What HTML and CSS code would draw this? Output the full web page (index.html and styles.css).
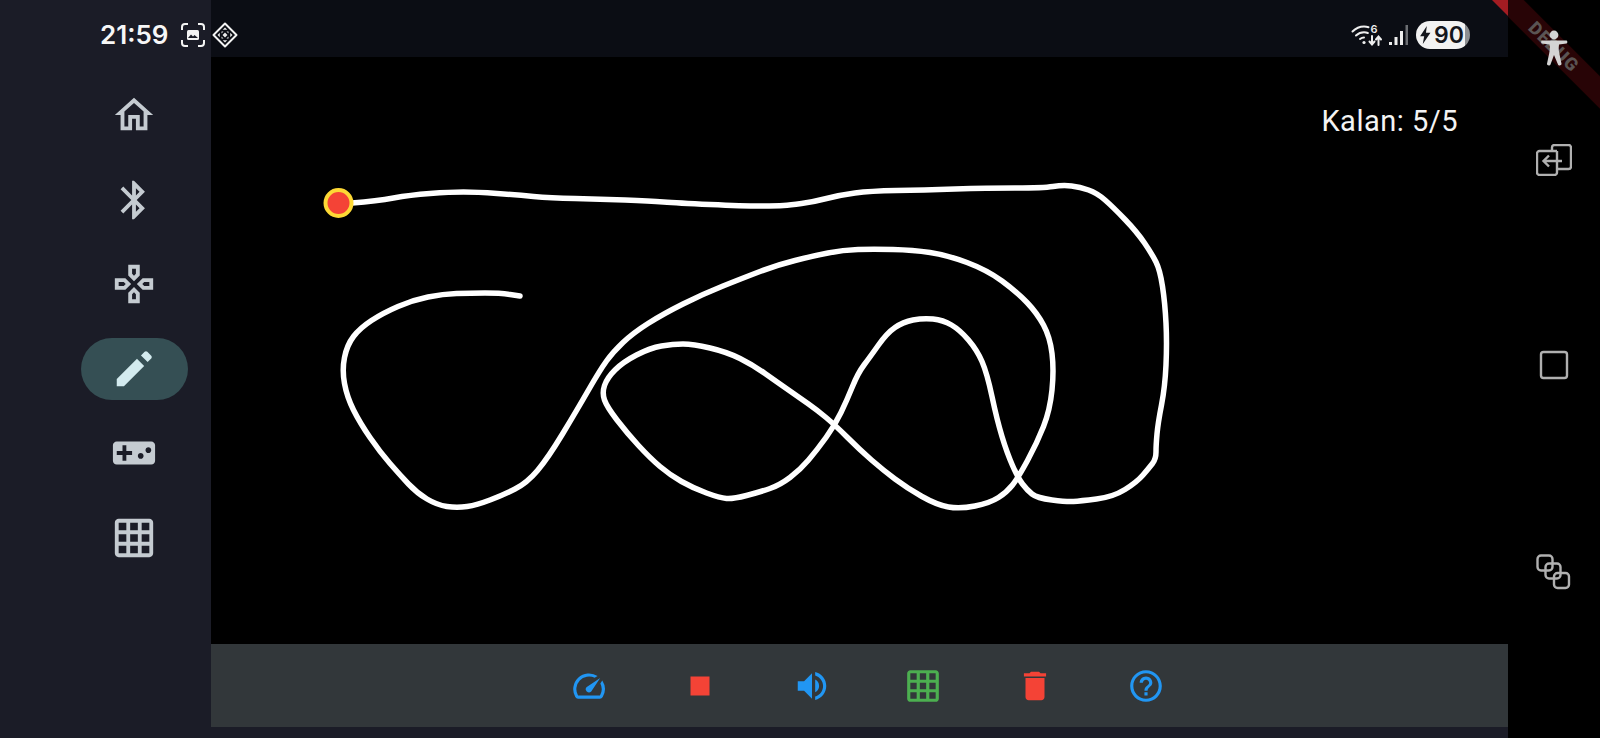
FILE: index.html
```html
<!DOCTYPE html>
<html lang="tr">
  <head>
    <meta charset="UTF-8">
    <meta name="viewport" content="width=device-width, initial-scale=1.0">
    <title>Çizim</title>
    <link rel="stylesheet" href="styles.css">
  </head>
  <body>
    <div class="screen">
      <aside class="rail">
        <div class="rail-status">
          <span class="clock">21:59</span>
          <svg class="capture-icon" viewBox="0 0 24 24"><path class="corners" d="M1 7V4a3 3 0 0 1 3-3h3M17 1h3a3 3 0 0 1 3 3v3M23 17v3a3 3 0 0 1-3 3h-3M7 23H4a3 3 0 0 1-3-3v-3"/><path class="picture" d="M7.5 7h9a1.5 1.5 0 0 1 1.5 1.500v7a1.500 1.500 0 0 1-1.500 1.500h-9A1.500 1.500 0 0 1 6 15.500v-7A1.500 1.500 0 0 1 7.500 7z"/><path class="scene" d="M7 15l3-3.500 2 2 1.500-1.500 3.500 3z"/></svg>
        </div>
        <nav class="rail-nav">
          <div class="nav-item"><svg viewBox="0 0 24 24"><path d="M12 5.690l5 4.500V18h-2v-6H9v6H7v-7.810l5-4.500M12 3L2 12h3v8h6v-6h2v6h6v-8h3L12 3z"/></svg></div>
          <div class="nav-item"><svg viewBox="0 0 24 24"><path d="M17.710 7.710L12 2h-1v7.590L6.410 5 5 6.410 10.590 12 5 17.590 6.410 19 11 14.410V22h1l5.710-5.710-4.300-4.290 4.300-4.290zM13 5.830l1.880 1.880L13 9.590V5.830zm1.880 10.460L13 18.170v-3.760l1.880 1.880z"/></svg></div>
          <div class="nav-item"><svg viewBox="0 0 24 24"><path d="M13 4v2.670l-1 1-1-1V4h2m7 7v2h-2.670l-1-1 1-1H20M6.670 11l1 1-1 1H4v-2h2.670M12 16.330l1 1V20h-2v-2.670l1-1M15 2H9v5.500l3 3 3-3V2zm7 7h-5.500l-3 3 3 3H22V9zM7.500 9H2v6h5.500l3-3-3-3zm4.500 4.500l-3 3V22h6v-5.500l-3-3z"/></svg></div>
          <div class="nav-item active"><svg viewBox="0 0 24 24"><path d="M3 17.250V21h3.750L17.300 10.450l-3.750-3.750z"/><path d="M21 6.500c.39-.39.39-1.020 0-1.410l-2.050-2.050c-.39-.39-1.020-.39-1.410 0l-1.900 1.900 3.460 3.460z"/></svg></div>
          <div class="nav-item"><svg viewBox="0 0 24 24"><path d="M21 6H3c-1.100 0-2 .9-2 2v8c0 1.100.9 2 2 2h18c1.100 0 2-.9 2-2V8c0-1.100-.9-2-2-2zm-10 7H8v3H6v-3H3v-2h3V8h2v3h3v2zm4.500 2c-.83 0-1.500-.67-1.500-1.500s.67-1.500 1.500-1.500 1.500.67 1.500 1.500-.67 1.500-1.500 1.500zm4-3c-.83 0-1.500-.67-1.500-1.500S18.670 9 19.500 9s1.500.67 1.500 1.500-.67 1.500-1.500 1.500z"/></svg></div>
          <div class="nav-item"><svg viewBox="0 0 24 24"><path d="M20 2H4c-1.100 0-2 .9-2 2v16c0 1.100.9 2 2 2h16c1.100 0 2-.9 2-2V4c0-1.100-.9-2-2-2zM8 20H4v-4h4v4zm0-6H4v-4h4v4zm0-6H4V4h4v4zm6 12h-4v-4h4v4zm0-6h-4v-4h4v4zm0-6h-4V4h4v4zm6 12h-4v-4h4v4zm0-6h-4v-4h4v4zm0-6h-4V4h4v4z"/></svg></div>
        </nav>
      </aside>

      <main class="main">
        <header class="topbar">
          <svg class="diamond-icon" viewBox="0 0 26 26"><path class="diamond" d="M13 1.500L24.500 13 13 24.500 1.500 13z"/><path class="diamond-fill" d="M13 5.500l2.300 2.300h-4.600zM13 20.500l-2.300-2.300h4.600zM5.500 13l2.300-2.300v4.600zM20.500 13l-2.300 2.300v-4.600zM13 10.500l2.500 2.500-2.500 2.500-2.500-2.500zM9.500 9.500h2l-2 2zM16.500 9.500v2l-2-2zM9.500 16.500v-2l2 2zM16.500 16.500h-2l2-2z"/></svg>
          <div class="status-right">
            <svg class="wifi-icon" viewBox="0 0 32 24"><path class="wifi" d="M1.500 8.500C5 5 9 3.500 13 3.500c1.500 0 3 .2 4.500.7M5 12.500c2.500-2.200 5-3.200 8-3.200 1.300 0 2.600.2 3.800.7M9 16c1.300-1 2.600-1.500 4-1.500"/><circle class="wifi-dot" cx="13" cy="19.500" r="1.600"/><text class="wifi-gen" x="19.500" y="10">6</text><path class="wifi" d="M21 13v8M18.500 18.500l2.500 3 2.500-3M27.500 22v-8M25 16.500l2.500-3 2.500 3"/></svg>
            <svg class="signal-icon" viewBox="0 0 20 22"><path class="bar" d="M1 18h3v3H1zM6.500 13h3v8h-3zM12 7h3v14h-3z"/><path class="bar-empty" d="M17.500 1H20v20h-2.500z"/></svg>
            <div class="battery">
              <svg class="bolt" viewBox="0 0 12 20"><path d="M7.500 0L0 11.500h4.500L3 20l8.500-12.500H6.500z"/></svg>
              <span>90</span>
            </div>
          </div>
          <div class="corner-flag"></div>
        </header>

        <section class="canvas">
          <svg class="drawing" viewBox="211 57 1297 587">
            <path id="stroke" class="stroke" d=""/>
            <circle class="start-dot" cx="338.500" cy="203" r="13"/>
          </svg>
          <div class="remaining">Kalan: 5/5</div>
        </section>

        <footer class="toolbar">
          <svg class="blue" viewBox="0 0 24 24"><path d="M20.380 8.570l-1.230 1.850a8 8 0 0 1-.22 7.580H5.070A8 8 0 0 1 15.580 6.850l1.850-1.230A10 10 0 0 0 3.350 19a2 2 0 0 0 1.720 1h13.850a2 2 0 0 0 1.740-1 10 10 0 0 0-.27-10.440z"/><path d="M10.590 15.410a2 2 0 0 0 2.830 0l5.660-8.490-8.490 5.660a2 2 0 0 0 0 2.830z"/></svg>
          <svg class="red" viewBox="0 0 24 24"><path d="M6 6h12v12H6z"/></svg>
          <svg class="blue" viewBox="0 0 24 24"><path d="M3 9v6h4l5 5V4L7 9H3zm13.500 3c0-1.770-1.020-3.290-2.500-4.030v8.050c1.480-.73 2.500-2.250 2.500-4.020zM14 3.230v2.060c2.890.86 5 3.540 5 6.710s-2.110 5.850-5 6.710v2.060c4.010-.91 7-4.490 7-8.770s-2.990-7.860-7-8.770z"/></svg>
          <svg class="green" viewBox="0 0 24 24"><path d="M20 2H4c-1.100 0-2 .9-2 2v16c0 1.100.9 2 2 2h16c1.100 0 2-.9 2-2V4c0-1.100-.9-2-2-2zM8 20H4v-4h4v4zm0-6H4v-4h4v4zm0-6H4V4h4v4zm6 12h-4v-4h4v4zm0-6h-4v-4h4v4zm0-6h-4V4h4v4zm6 12h-4v-4h4v4zm0-6h-4v-4h4v4zm0-6h-4V4h4v4z"/></svg>
          <svg class="red" viewBox="0 0 24 24"><path d="M6 19c0 1.100.9 2 2 2h8c1.100 0 2-.9 2-2V7H6v12zM19 4h-3.500l-1-1h-5l-1 1H5v2h14V4z"/></svg>
          <svg class="blue" viewBox="0 0 24 24"><path d="M11 18h2v-2h-2v2zm1-16C6.480 2 2 6.480 2 12s4.480 10 10 10 10-4.480 10-10S17.520 2 12 2zm0 18c-4.410 0-8-3.590-8-8s3.590-8 8-8 8 3.590 8 8-3.590 8-8 8zm0-14c-2.210 0-4 1.790-4 4h2c0-1.100.9-2 2-2s2 .9 2 2c0 2-3 1.750-3 5h2c0-2.250 3-2.500 3-5 0-2.210-1.790-4-4-4z"/></svg>
        </footer>
        <div class="main-bottom"></div>
      </main>

      <aside class="side">
        <div class="debug-banner"><span>DEBUG</span></div>
        <svg class="side-access" viewBox="0 0 28 36"><circle cx="14" cy="5" r="4.400"/><path d="M1.500 10.500h25c1.100 0 1.100 3 0 3l-7.500 1c-.5 3.500-.3 6 .3 8.800l2.200 10.500c.3 1.800-3 2.400-3.500.6L14 25l-3.500 9.400c-.6 1.800-3.800 1.200-3.500-.6l2.200-10.500c.6-2.800.8-5.300.3-8.800l-7.500-1c-1.100 0-1.100-3 0-3z"/></svg>
        <svg class="side-back" viewBox="0 0 36 32"><path d="M16 7V3.500A2.500 2.500 0 0 1 18.500 1h14A2.500 2.500 0 0 1 35 3.500v19a2.500 2.500 0 0 1-2.500 2.500H21"/><path d="M21 7H3.500A2.500 2.500 0 0 0 1 9.500v19A2.500 2.500 0 0 0 3.500 31h15a2.500 2.500 0 0 0 2.500-2.500V7"/><path d="M26 17H8M13 11.500L7.500 17l5.500 5.500"/></svg>
        <svg class="side-home" viewBox="0 0 32 32"><rect x="3" y="3" width="26" height="26" rx="2.500"/></svg>
        <svg class="side-recent" viewBox="0 0 36 36"><rect x="1.500" y="1.500" width="15" height="15" rx="3.500"/><rect x="9.500" y="9.500" width="15" height="15" rx="3.500"/><rect x="18" y="19" width="15" height="15" rx="3.500"/></svg>
      </aside>
    </div>

    <script>
      // hand traced points of the drawn line, page coordinates
      const points = [
        [352,203],[377,201],[410,195],[450,192],[477,192],[517,195],[550,198],[600,199],[650,201],[677,203],
        [743,206],[777,206],[790,205],[813,202],[840,195],[870,191],[923,190],[987,188],[1043,188],[1063,185],
        [1080,187],[1097,193],[1113,207],[1137,232],[1152,254],[1160,270],[1165,303],[1167,343],[1165,387],
        [1158,423],[1156,445],[1156,459],[1149,468],[1137,482],[1113,497],[1080,501],[1067,502],[1037,498],[1027,490],[1018,478],
        [1007,453],[997,420],[987,373],[977,350],[960,330],[943,320],[923,318],[903,322],[887,333],[870,357],
        [858,373],[847,400],[835,425],[817,450],[800,470],[780,485],[760,492],[733,499],[720,498],[693,488],
        [670,475],[650,458],[627,433],[607,407],[602,393],[607,378],[623,362],[650,348],[673,344],[693,344],
        [727,352],[753,365],[777,382],[800,398],[817,410],[835,425],[860,450],[883,470],[907,488],[937,505],
        [960,509],[990,503],[1007,492],[1018,478],[1037,443],[1050,410],[1054,370],[1050,337],[1037,313],
        [1017,292],[987,270],[947,255],[913,250],[873,249],[843,250],[813,256],[777,265],[743,278],[703,294],
        [663,314],[633,333],[613,352],[600,370],[577,410],[548,458],[527,483],[503,495],[477,505],[457,508],
        [437,505],[417,493],[400,475],[380,452],[360,423],[347,397],[342,370],[347,345],[360,328],[383,313],
        [413,300],[443,294],[470,293],[500,293],[520,296]
      ];

      let d = `M${points[0][0]} ${points[0][1]}`;
      for (let i = 1; i < points.length - 1; i++) {
        const midX = (points[i][0] + points[i + 1][0]) / 2;
        const midY = (points[i][1] + points[i + 1][1]) / 2;
        d += ` Q${points[i][0]} ${points[i][1]} ${midX} ${midY}`;
      }
      const last = points[points.length - 1];
      d += ` L${last[0]} ${last[1]}`;
      document.getElementById('stroke').setAttribute('d', d);
    </script>
  </body>
</html>
```

FILE: styles.css
```css
* { box-sizing: border-box; margin: 0; padding: 0; }
:root {
  --rail-color: #1b1c27;
  --top-color: #0b0d14;
  --icon-color: #c5cbd1;
  --side-color: #b0b0b0;
  --blue: #2196f3;
  --red: #f44336;
  --green: #4caf50;
}
body {
  font-family: Inter, "Noto Sans", sans-serif;
  background: #000;
  overflow: hidden;
}
.screen {
  display: grid;
  grid-template-columns: 211px 1fr 92px;
  width: 1600px;
  height: 738px;
}

/* left rail */
.rail {
  background: var(--rail-color);
  display: flex;
  flex-direction: column;
}
.rail-status {
  height: 57px;
  padding: 12px 0 0 100px;
  display: flex;
  align-items: center;
  gap: 14px;
}
.clock {
  color: #f7f7f7;
  font-size: 26px;
  font-weight: 600;
  width: 67px;
}
.capture-icon {
  width: 24px;
  height: 24px;
  flex: none;
}
.capture-icon .corners {
  fill: none;
  stroke: #f4f4f4;
  stroke-width: 2;
}
.capture-icon .picture {
  fill: #f4f4f4;
}
.capture-icon .scene {
  fill: var(--rail-color);
}
.rail-nav {
  display: flex;
  flex-direction: column;
  align-items: center;
  gap: 22.500px;
  padding: 27px 0 0 57px;
}
.nav-item {
  width: 107px;
  height: 62px;
  border-radius: 31px;
  display: flex;
  align-items: center;
  justify-content: center;
}
.nav-item svg {
  width: 46px;
  height: 46px;
  fill: var(--icon-color);
}
.nav-item.active {
  background: #354f54;
}
.nav-item.active svg {
  fill: #d3ebef;
}

/* middle */
.main {
  display: flex;
  flex-direction: column;
  min-width: 0;
}
.topbar {
  position: relative;
  height: 57px;
  background: var(--top-color);
  display: flex;
  align-items: center;
  justify-content: space-between;
  padding: 12px 38px 0 1px;
}
.diamond-icon {
  width: 26px;
  height: 26px;
}
.diamond {
  fill: none;
  stroke: #f4f4f4;
  stroke-width: 2;
  stroke-linejoin: round;
}
.diamond-fill {
  fill: #e8e8e8;
}
.status-right {
  display: flex;
  align-items: center;
  gap: 5px;
}
.wifi-icon {
  width: 32px;
  height: 24px;
  overflow: visible;
}
.wifi {
  fill: none;
  stroke: #eee;
  stroke-width: 2;
  stroke-linecap: round;
}
.wifi-dot {
  fill: #eee;
}
.wifi-gen {
  fill: #eee;
  font-size: 11px;
  font-weight: 600;
}
.signal-icon {
  width: 20px;
  height: 22px;
}
.bar {
  fill: #eee;
}
.bar-empty {
  fill: #6c6e73;
}
.battery {
  margin-left: 3px;
  width: 54px;
  height: 28px;
  border-radius: 14px;
  background: linear-gradient(90deg, #f2f2f2 90%, #8d8f92 90%);
  display: flex;
  align-items: center;
  justify-content: center;
  gap: 3px;
  padding-right: 2px;
  color: #14161c;
  font-size: 23px;
  font-weight: 600;
}
.bolt {
  width: 11px;
  height: 18px;
  fill: #14161c;
}
.corner-flag {
  position: absolute;
  top: 0;
  right: 0;
  width: 16px;
  height: 16px;
  background: #a31c22;
  clip-path: polygon(0 0, 100% 0, 100% 100%);
}
.canvas {
  position: relative;
  flex: 1;
  background: #000;
}
.drawing {
  position: absolute;
  top: 0;
  left: 0;
  width: 100%;
  height: 100%;
}
.stroke {
  fill: none;
  stroke: #fff;
  stroke-width: 5.500;
  stroke-linecap: round;
  stroke-linejoin: round;
}
.start-dot {
  fill: var(--red);
  stroke: #fdd835;
  stroke-width: 4;
}
.remaining {
  position: absolute;
  top: 47px;
  right: 50px;
  color: #f4f4f4;
  font-family: Roboto, sans-serif;
  font-size: 29px;
  letter-spacing: 0.500px;
}
.toolbar {
  height: 83px;
  background: #32373a;
  display: flex;
  align-items: center;
  justify-content: center;
  gap: 73.500px;
  padding-left: 16px;
}
.toolbar svg {
  width: 38px;
  height: 38px;
}
.blue { fill: var(--blue); }
.red { fill: var(--red); }
.green { fill: var(--green); }
.main-bottom {
  height: 11px;
  background: var(--rail-color);
}

/* right rail */
.side {
  position: relative;
  overflow: hidden;
  background: #000;
  display: flex;
  flex-direction: column;
  align-items: center;
}
.debug-banner {
  position: absolute;
  top: 34.500px;
  left: -74px;
  width: 240px;
  height: 23px;
  background: #280406;
  transform: rotate(45deg);
  display: flex;
  align-items: center;
  justify-content: center;
  color: #5a5453;
  font-family: Roboto, sans-serif;
  font-size: 18px;
  font-weight: 900;
  letter-spacing: 1px;
}
.side svg {
  position: relative;
  flex: none;
}
.side-access {
  width: 28px;
  height: 36px;
  margin-top: 30px;
  fill: #d4d4d4;
}
.side-back {
  width: 36px;
  height: 32px;
  margin-top: 78px;
  fill: none;
  stroke: var(--side-color);
  stroke-width: 2.400;
}
.side-home {
  width: 32px;
  height: 32px;
  margin-top: 173px;
  fill: none;
  stroke: var(--side-color);
  stroke-width: 2.400;
}
.side-recent {
  width: 36px;
  height: 36px;
  margin-top: 173px;
  fill: none;
  stroke: var(--side-color);
  stroke-width: 2.400;
}
```
